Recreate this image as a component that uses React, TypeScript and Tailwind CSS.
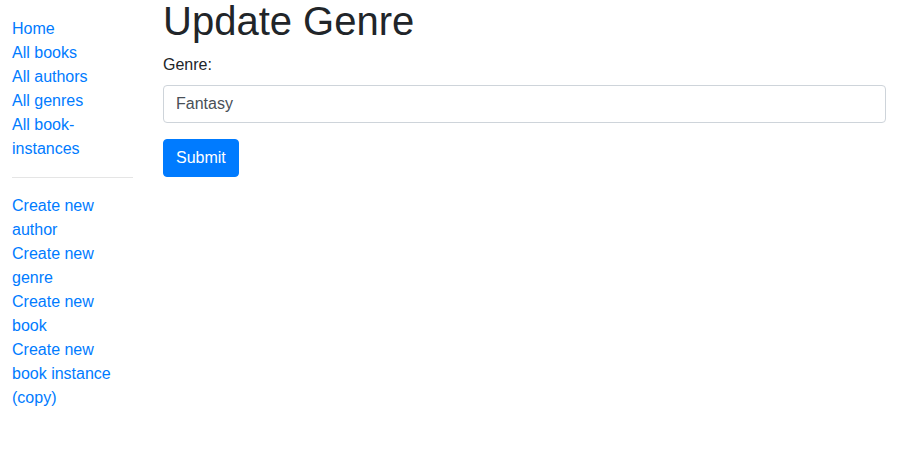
import React from 'react';

const topLinks = ['Home', 'All books', 'All authors', 'All genres', 'All book-instances'];
const createLinks = ['Create new author', 'Create new genre', 'Create new book', 'Create new book instance (copy)'];

export default function App() {
  return (
    <div className="flex mt-[-3px] font-['Liberation_Sans',Arial,sans-serif] text-base leading-6 text-[#212529] bg-white min-h-screen">
      {/* Sidebar */}
      <aside className="w-[151px] shrink-0 pl-3 pr-[18px]">
        <ul className="mt-5 mb-4 pr-[3px]">
          {topLinks.map((l) => (
            <li key={l}>
              <a href="#" className="text-[#007bff]">{l}</a>
            </li>
          ))}
        </ul>
        <hr className="my-4 border-t border-black/10" />
        <ul className="mb-4 pr-[3px]">
          {createLinks.map((l) => (
            <li key={l}>
              <a href="#" className="text-[#007bff]">{l}</a>
            </li>
          ))}
        </ul>
      </aside>

      {/* Main content */}
      <main className="flex-1 pl-3 pr-[13px]">
        <h1 className="text-[40px] leading-[48px] font-medium mb-2">Update Genre</h1>
        <form onSubmit={(e) => e.preventDefault()}>
          <div className="mb-4">
            <label htmlFor="name" className="block mb-2">Genre:</label>
            <input
              id="name"
              type="text"
              defaultValue="Fantasy"
              className="block w-full h-[38px] px-3 py-1.5 border border-[#ced4da] rounded text-[#495057] bg-white outline-none"
            />
          </div>
          <button type="submit" className="px-3 py-1.5 border border-[#007bff] rounded bg-[#007bff] text-white leading-6">
            Submit
          </button>
        </form>
      </main>
    </div>
  );
}
